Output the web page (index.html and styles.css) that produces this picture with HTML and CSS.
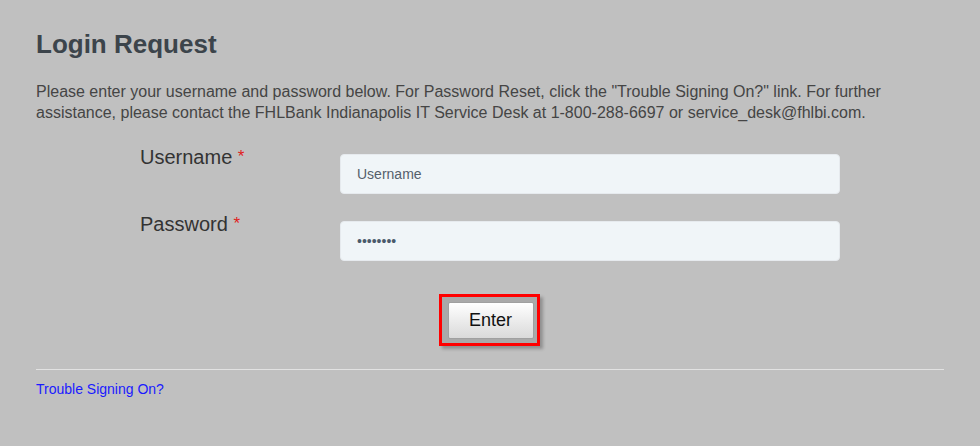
FILE: index.html
```html
<!DOCTYPE html>
<html lang="en">

<head>
    <meta charset="UTF-8">
    <meta name="viewport" content="width=device-width, initial-scale=1.0">
    <title>Login Request</title>
    <link rel="stylesheet" href="styles.css">
</head>

<body>
    <main class="page">
        <h1 class="title">Login Request</h1>
        <p class="intro">Please enter your username and password below. For Password Reset, click the "Trouble Signing On?" link. For further assistance, please contact the FHLBank Indianapolis IT Service Desk at 1-800-288-6697 or service_desk@fhlbi.com.</p>

        <form class="login" onsubmit="return false">
            <div class="row">
                <label for="user">Username <span class="req">*</span></label>
                <input id="user" type="text" placeholder="Username">
            </div>
            <div class="row">
                <label for="pass">Password <span class="req">*</span></label>
                <input id="pass" type="password" value="password">
            </div>
            <div class="actions">
                <span class="highlight">
                    <button type="submit" class="enter">Enter</button>
                </span>
            </div>
        </form>

        <hr class="divider">
        <a class="help" href="#">Trouble Signing On?</a>
    </main>
</body>

</html>
```

FILE: styles.css
```css
* {
    box-sizing: border-box;
}

body {
    margin: 0;
    background-color: #c0c0c0;
    font-family: 'Liberation Sans', Arial, sans-serif;
    color: #454545;
}

.page {
    padding: 29px 36px 0 36px;
}

.title {
    margin: 0;
    font-size: 26px;
    line-height: 30px;
    font-weight: bold;
    color: #3c444b;
}

.intro {
    margin: 22px 0 0 0;
    font-size: 16px;
    line-height: 21px;
    color: #454545;
}

.login {
    margin-top: 23px;
    padding-left: 104px;
}

.row {
    display: flex;
    align-items: flex-start;
    margin-bottom: 19px;
}

.row label {
    width: 200px;
    font-size: 20px;
    color: #333;
}

.req {
    color: #e0201c;
    font-size: 17px;
    vertical-align: 2px;
}

.row input {
    margin-top: 8px;
    width: 500px;
    height: 40px;
    padding: 0 16px;
    border: 1px solid #e6eaee;
    border-radius: 4px;
    background-color: #f0f5f8;
    font-family: 'Liberation Sans', Arial, sans-serif;
    font-size: 14px;
    color: #4a5a6b;
    outline: none;
}

.row input::placeholder {
    color: #55606c;
}

.actions {
    display: flex;
    justify-content: center;
    width: 700px;
    margin-top: 33px;
}

.highlight {
    display: inline-block;
    margin-right: 2px;
    border: 3px solid #ff0000;
    padding: 5px 3px 4px 6px;
    background-color: #a9a9a9;
    box-shadow: 3px 3px 3px rgba(0, 0, 0, 0.25);
}

.enter {
    display: block;
    width: 86px;
    height: 37px;
    border: 1px solid #a0a0a0;
    border-radius: 2px;
    background: linear-gradient(#ffffff, #e8e8e8 60%, #dadada);
    font-family: 'Liberation Sans', Arial, sans-serif;
    font-size: 18px;
    color: #111;
    cursor: pointer;
}

.divider {
    margin: 23px 0 0 0;
    border: 0;
    border-top: 1px solid #e2e2e2;
}

.help {
    display: inline-block;
    margin-top: 11px;
    font-size: 14px;
    color: #1a1aff;
    text-decoration: none;
}
```
